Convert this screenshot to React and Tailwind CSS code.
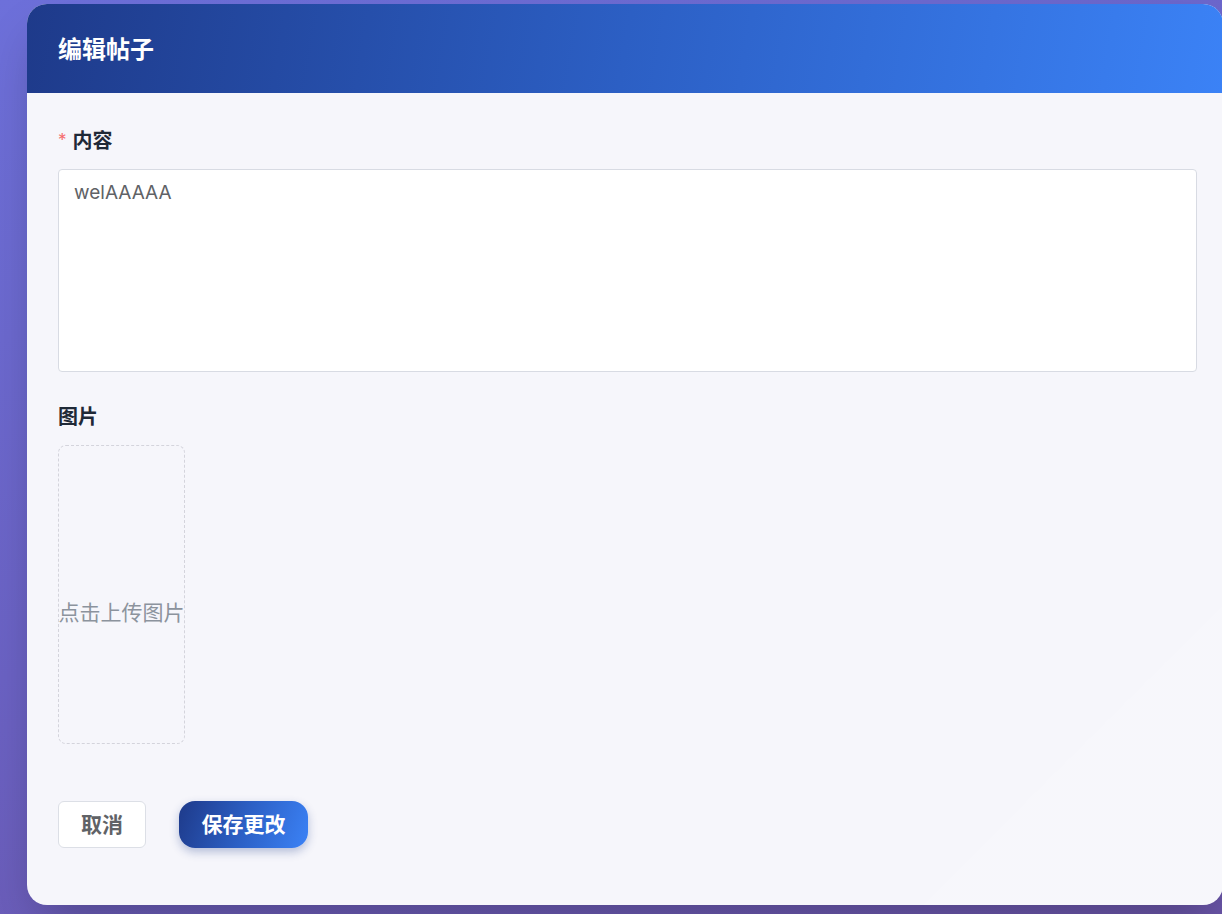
import { useState } from "react";

const font = { fontFamily: 'Inter, "Noto Sans CJK SC", sans-serif' };

const EditPostModal = () => {
    const [content, setContent] = useState("welAAAAA");

    return (
        <div
            className="w-[1222px] h-[914px] overflow-hidden bg-[linear-gradient(160deg,#6d70da_0%,#6b62c4_50%,#6a55a8_100%)] pl-[27px] pt-[4px]"
            style={font}
        >
            <div className="relative w-[1196px] h-[901px] rounded-[20px] overflow-hidden bg-[#f6f6fb] flex flex-col shadow-2xl">
                {/* HEADER */}
                <div className="h-[89px] shrink-0 flex items-center px-[31px] pt-[3px] bg-[linear-gradient(100deg,#1e3a8a_0%,#2c5fc4_50%,#3b82f6_100%)]">
                    <h2 className="text-[24px] font-bold text-white leading-none">编辑帖子</h2>
                </div>

                {/* sheen */}
                <div className="pointer-events-none absolute right-0 bottom-0 w-[300px] h-[300px] bg-[linear-gradient(135deg,transparent_50%,rgba(255,255,255,0.35)_50%)] opacity-40" />

                <div className="relative flex flex-col px-[31px] pt-[34px]">
                    {/* CONTENT */}
                    <label className="flex items-center gap-[6px] h-[28px] text-[20px] font-bold text-[#1f2937]">
                        <span className="text-[#f56c6c] font-normal text-[17px]">*</span>
                        内容
                    </label>
                    <textarea
                        value={content}
                        onChange={(e) => setContent(e.target.value)}
                        className="mt-[14px] w-[1139px] h-[203px] resize-none bg-white border border-[#d8dbe3] rounded-[4px] px-[15px] pt-[9px] text-[19px] leading-[28px] text-[#606266] outline-none"
                        style={font}
                    />

                    {/* IMAGES */}
                    <label className="mt-[31px] flex items-center h-[28px] text-[20px] font-bold text-[#1f2937]">
                        图片
                    </label>
                    <div className="mt-[14px] w-[127px] h-[299px] border border-dashed border-[#d4d4dc] rounded-[8px] flex items-center justify-center pt-[37px] cursor-pointer">
                        <span className="text-[21px] text-[#8c939d] whitespace-nowrap">点击上传图片</span>
                    </div>

                    {/* ACTIONS */}
                    <div className="mt-[57px] flex items-center gap-[33px]">
                        <button className="w-[88px] h-[47px] bg-white border border-[#dcdfe6] rounded-[6px] text-[21px] font-bold text-[#606266]">
                            取消
                        </button>
                        <button className="w-[129px] h-[47px] rounded-[16px] text-[21px] font-bold text-white bg-[linear-gradient(110deg,#1e3a8a_0%,#2c5fc4_50%,#3b82f6_100%)] shadow-[0_4px_10px_rgba(30,58,138,0.3)]">
                            保存更改
                        </button>
                    </div>
                </div>
            </div>
        </div>
    );
};

export default EditPostModal;
